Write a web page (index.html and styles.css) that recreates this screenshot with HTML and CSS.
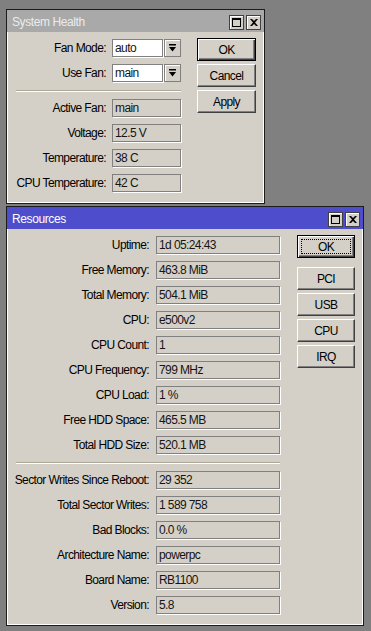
FILE: index.html
```html
<!DOCTYPE html>
<html>
<head>
<meta charset="utf-8">
<link rel="stylesheet" href="styles.css">
</head>
<body>
<div class="desk">
  <div class="win sh">
    <div class="tbar inactive">
      <span class="ttl">System Health</span>
      <div class="tbtns">
        <span class="tb"><svg width="9" height="9" viewBox="0 0 9 9"><rect x="0.5" y="0.5" width="8" height="8" fill="none" stroke="#000"/><rect x="0" y="0" width="9" height="2" fill="#000"/></svg></span>
        <span class="tb"><svg width="8" height="7" viewBox="0 0 8 7"><path d="M0 0h2l2 2 2-2h2L5 3.5 8 7H6L4 5 2 7H0l3-3.5z" fill="#000"/></svg></span>
      </div>
    </div>
    <div class="body">
      <div class="form sh-form">
        <div class="sec">
          <div class="row"><span class="lbl">Fan Mode:</span><div class="combo"><div class="fld edit">auto</div><div class="dd"><svg width="7" height="8" viewBox="0 0 7 8"><rect x="0" y="0" width="7" height="1.5" fill="#000"/><path d="M0 3h7L3.5 7.5z" fill="#000"/></svg></div></div></div>
          <div class="row"><span class="lbl">Use Fan:</span><div class="combo"><div class="fld edit">main</div><div class="dd"><svg width="7" height="8" viewBox="0 0 7 8"><rect x="0" y="0" width="7" height="1.5" fill="#000"/><path d="M0 3h7L3.5 7.5z" fill="#000"/></svg></div></div></div>
        </div>
        <div class="sep"></div>
        <div class="sec">
          <div class="row"><span class="lbl">Active Fan:</span><div class="fld">main</div></div>
          <div class="row"><span class="lbl">Voltage:</span><div class="fld">12.5 V</div></div>
          <div class="row"><span class="lbl">Temperature:</span><div class="fld">38 C</div></div>
          <div class="row"><span class="lbl">CPU Temperature:</span><div class="fld">42 C</div></div>
        </div>
      </div>
      <div class="btns">
        <div class="btn def">OK</div>
        <div class="btn">Cancel</div>
        <div class="btn">Apply</div>
      </div>
    </div>
  </div>

  <div class="win res">
    <div class="tbar active">
      <span class="ttl">Resources</span>
      <div class="tbtns">
        <span class="tb"><svg width="9" height="9" viewBox="0 0 9 9"><rect x="0.5" y="0.5" width="8" height="8" fill="none" stroke="#000"/><rect x="0" y="0" width="9" height="2" fill="#000"/></svg></span>
        <span class="tb"><svg width="8" height="7" viewBox="0 0 8 7"><path d="M0 0h2l2 2 2-2h2L5 3.5 8 7H6L4 5 2 7H0l3-3.5z" fill="#000"/></svg></span>
      </div>
    </div>
    <div class="body">
      <div class="form res-form">
        <div class="sec">
          <div class="row"><span class="lbl">Uptime:</span><div class="fld">1d 05:24:43</div></div>
          <div class="row"><span class="lbl">Free Memory:</span><div class="fld">463.8 MiB</div></div>
          <div class="row"><span class="lbl">Total Memory:</span><div class="fld">504.1 MiB</div></div>
          <div class="row"><span class="lbl">CPU:</span><div class="fld">e500v2</div></div>
          <div class="row"><span class="lbl">CPU Count:</span><div class="fld">1</div></div>
          <div class="row"><span class="lbl">CPU Frequency:</span><div class="fld">799 MHz</div></div>
          <div class="row"><span class="lbl">CPU Load:</span><div class="fld">1 %</div></div>
          <div class="row"><span class="lbl">Free HDD Space:</span><div class="fld">465.5 MB</div></div>
          <div class="row"><span class="lbl">Total HDD Size:</span><div class="fld">520.1 MB</div></div>
        </div>
        <div class="sep"></div>
        <div class="sec">
          <div class="row"><span class="lbl">Sector Writes Since Reboot:</span><div class="fld">29 352</div></div>
          <div class="row"><span class="lbl">Total Sector Writes:</span><div class="fld">1 589 758</div></div>
          <div class="row"><span class="lbl">Bad Blocks:</span><div class="fld">0.0 %</div></div>
          <div class="row"><span class="lbl">Architecture Name:</span><div class="fld">powerpc</div></div>
          <div class="row"><span class="lbl">Board Name:</span><div class="fld">RB1100</div></div>
          <div class="row"><span class="lbl">Version:</span><div class="fld">5.8</div></div>
        </div>
      </div>
      <div class="btns res-btns">
        <div class="btn def focus"><span class="cap">OK</span></div>
        <div class="btn gapped">PCI</div>
        <div class="btn">USB</div>
        <div class="btn">CPU</div>
        <div class="btn">IRQ</div>
      </div>
    </div>
  </div>
</div>
</body>
</html>
```

FILE: styles.css
```css
* { box-sizing: border-box; }

body {
  margin: 0;
  background: #808080;
  font-family: "Liberation Sans", Arial, sans-serif;
  font-size: 12px;
  letter-spacing: -0.6px;
  color: #000;
}

.desk {
  padding: 9px 0 0 6px;
  display: flex;
  flex-direction: column;
  align-items: flex-start;
  gap: 2px;
}

.win {
  border: 1px solid #1c1c1c;
  background: #d4d0c8;
  box-shadow: inset 1px 0 0 #fff, inset -1px -1px 0 #fff;
}

.sh { width: 259px; }
.res { width: 358px; }

.tbar {
  height: 22px;
  display: flex;
  align-items: center;
  justify-content: space-between;
  padding: 0 3px 0 5px;
}

.tbar.inactive { background: #a9a9a9; color: #ececec; }
.tbar.active { background: #4e4ecc; color: #fff; }

.ttl { padding-top: 1px; letter-spacing: -0.4px; }

.tbtns {
  display: flex;
  gap: 2px;
  padding-top: 2px;
}

.tb {
  width: 15px;
  height: 15px;
  border: 1px solid #404040;
  background: #d4d0c8;
  box-shadow: inset 1px 1px 0 #fff;
  display: flex;
  align-items: center;
  justify-content: center;
}

.body {
  display: flex;
  align-items: flex-start;
  padding: 7px 0 11px 0;
}

.form {
  display: flex;
  flex-direction: column;
}

.sec {
  display: flex;
  flex-direction: column;
  gap: 7px;
}

.row {
  display: flex;
  align-items: center;
  height: 18px;
}

.lbl {
  text-align: right;
  flex: none;
  white-space: nowrap;
}

.sh-form .lbl { width: 99px; margin-right: 6px; }
.sh-form .fld, .sh-form .combo { width: 69px; }
.res-form .lbl { width: 142px; margin-right: 7px; }
.res-form .fld { width: 124px; }

.sep {
  height: 2px;
  border-top: 1px solid #aca899;
  border-bottom: 1px solid #fff;
  margin: 8px 0 7px 9px;
}

.fld {
  height: 18px;
  border: 1px solid #808080;
  box-shadow: 1px 1px 0 #fff;
  padding: 0 2px;
  display: flex;
  align-items: center;
  color: #141414;
  white-space: nowrap;
}

.fld.edit {
  background: #fff;
  flex: 1;
}

.combo {
  display: flex;
  gap: 1px;
  height: 18px;
}

.dd {
  width: 17px;
  height: 18px;
  flex: none;
  border: 1px solid #808080;
  box-shadow: inset 1px 1px 0 #fff;
  display: flex;
  align-items: center;
  justify-content: center;
}

.btns {
  display: flex;
  flex-direction: column;
  gap: 3px;
  margin-top: -1px;
}

.sh .btns { margin-left: 16px; }
.res .btns { margin-left: 17px; }

.btn {
  width: 59px;
  height: 23px;
  border: 1px solid;
  border-color: #fff #404040 #404040 #fff;
  box-shadow: inset -1px -1px 0 #808080;
  display: flex;
  align-items: center;
  justify-content: center;
}

.res-btns .btn { width: 58px; }

.btn.def {
  border: 1px solid #000;
  box-shadow: inset 1px 1px 0 #fff, inset -1px -1px 0 #404040, inset -2px -2px 0 #808080;
}

.btn.focus { padding: 3px; }

.btn.focus .cap {
  flex: 1;
  align-self: stretch;
  display: flex;
  align-items: center;
  justify-content: center;
  border: 1px dotted #000;
}

.btn.gapped { margin-top: 6px; }
```
